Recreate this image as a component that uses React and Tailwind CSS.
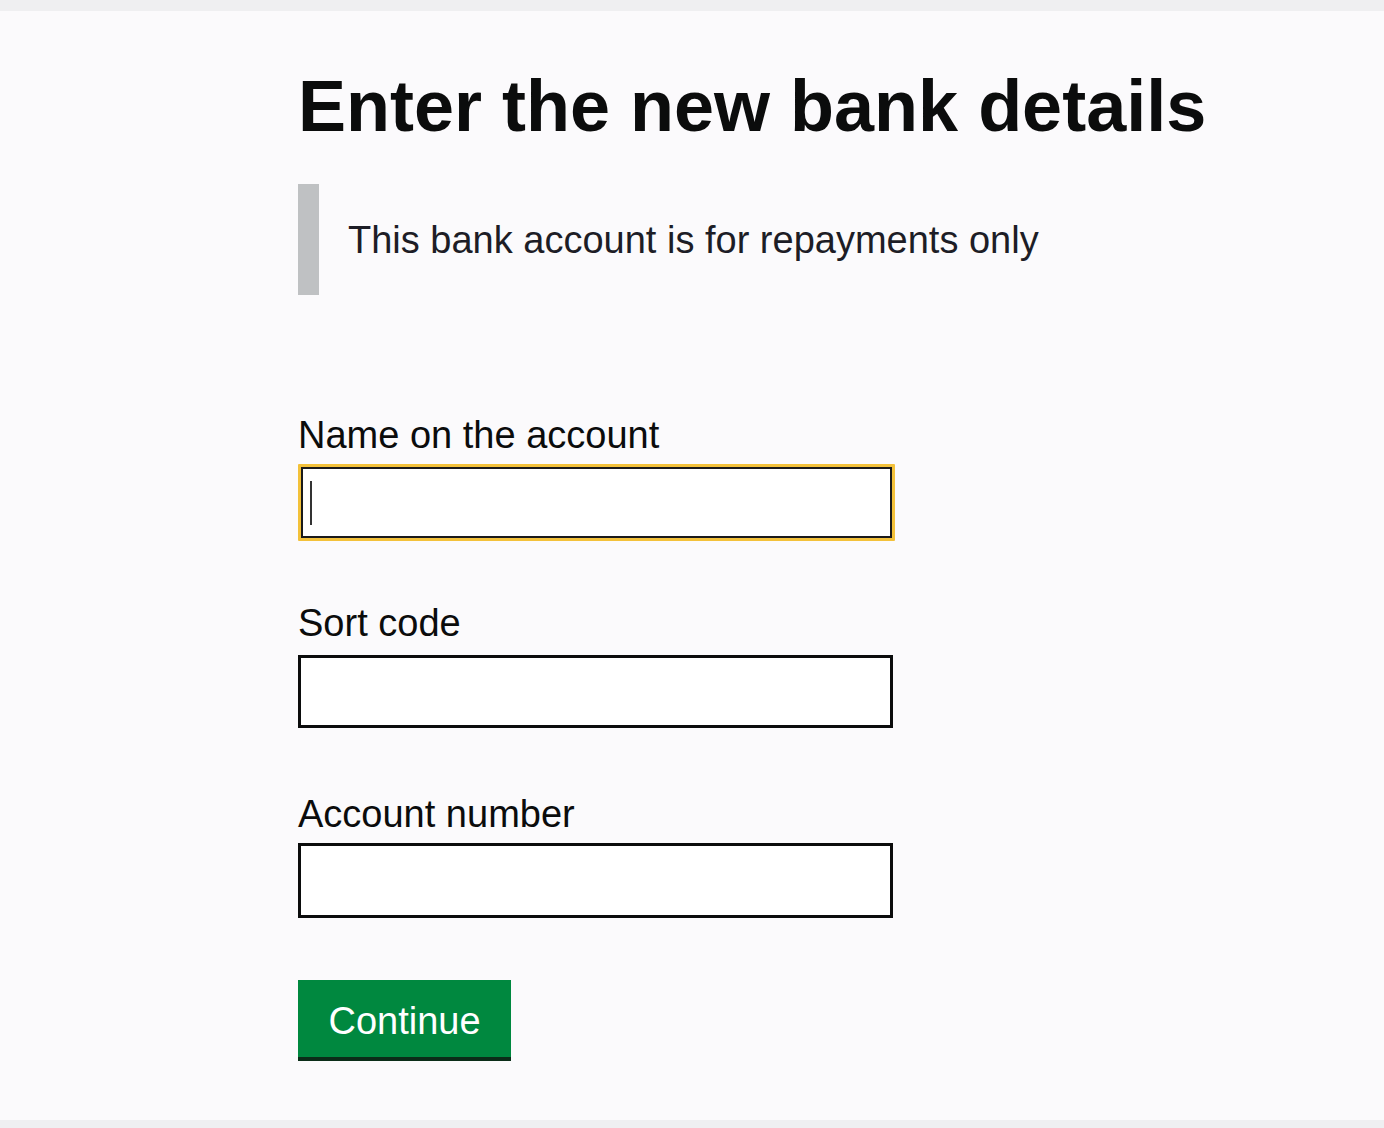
export default function App() {
    return (
        <div className="min-h-[1128px] bg-[#fbfafc] flex flex-col font-['Liberation_Sans',Arial,sans-serif] text-[#0b0c0c]">
            <div className="h-[11px] bg-[#efeff1]"></div>

            <main className="flex-1 pl-[298px] pt-[55px]">
                <h1 className="text-[72px] font-bold leading-[80px]">Enter the new bank details</h1>

                {/* inset text */}
                <div className="mt-[38px] flex items-center h-[111px] border-l-[21px] border-[#bfc1c3] pl-[29px]">
                    <p className="text-[38px] leading-[44px] text-[#1d1d26]">This bank account is for repayments only</p>
                </div>

                <form className="mt-[120px] flex flex-col">
                    <label className="text-[38px] leading-[40px]">Name on the account</label>
                    <div className="mt-[9px] w-[597px] h-[77px] border-[3px] border-[#f3c13a] rounded-[1px]">
                        <div className="h-full border-[2px] border-[#1a1a1a] bg-white flex items-center pl-[7px]">
                            <span className="w-[2px] h-[44px] bg-[#333]"></span>
                        </div>
                    </div>

                    <label className="mt-[62px] text-[38px] leading-[40px]">Sort code</label>
                    <input type="text" className="mt-[12px] w-[595px] h-[73px] border-[3px] border-[#0b0c0c] bg-white outline-none" />

                    <label className="mt-[66px] text-[38px] leading-[40px]">Account number</label>
                    <input type="text" className="mt-[9px] w-[595px] h-[75px] border-[3px] border-[#0b0c0c] bg-white outline-none" />

                    <button type="button" className="mt-[62px] w-[213px] h-[77px] bg-[#00883f] text-white text-[38px] leading-none shadow-[0_4px_0_#0b2d18] pt-[4px] self-start">
                        Continue
                    </button>
                </form>
            </main>

            <div className="h-[8px] bg-[#efeff1]"></div>
        </div>
    );
}
